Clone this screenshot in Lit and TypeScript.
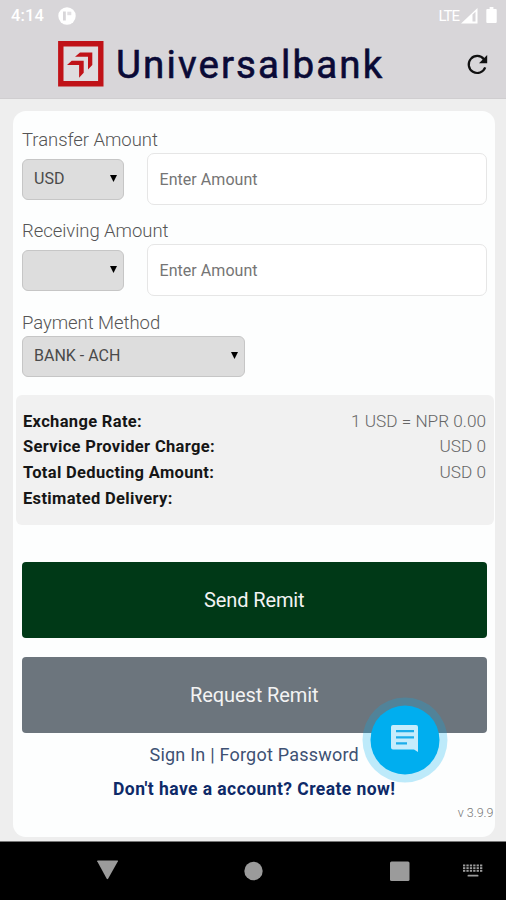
import { LitElement, html, css, svg } from "lit";
import { customElement, property } from "lit/decorators.js";

@customElement("select-box")
class SelectBox extends LitElement {
  @property() value = "";

  static styles = css`
    :host {
      display: flex;
      align-items: center;
      justify-content: space-between;
      box-sizing: border-box;
      height: 41px;
      padding: 0 6px 1px 11px;
      border: 1px solid #c6c6c6;
      border-radius: 6px;
      background: #dddddd;
      color: #4a4a4a;
      font: 400 16px Roboto, sans-serif;
      white-space: nowrap;
    }
    .arrow {
      width: 7px;
      height: 7px;
      fill: #000;
    }
  `;

  render() {
    return html`<span>${this.value}</span>
      <svg class="arrow" viewBox="0 0 7 7"><path d="M0 0h7L3.5 7z" /></svg>`;
  }
}

@customElement("app-root")
class AppRoot extends LitElement {
  static styles = css`
    :host {
      display: flex;
      flex-direction: column;
      position: relative;
      height: 900px;
      background: #eeeeee;
      font-family: Roboto, sans-serif;
      overflow: hidden;
    }
    svg {
      display: block;
    }
    .top {
      box-sizing: border-box;
      height: 99px;
      background: #d8d6d9;
      border-bottom: 1px solid #d0ced0;
    }
    .status {
      display: flex;
      align-items: center;
      height: 31px;
      padding: 0 8px 1px 11px;
      color: #fff;
      font-size: 16.5px;
      font-weight: 500;
    }
    .clock {
      width: 47px;
      letter-spacing: 0.1px;
    }
    .lte {
      margin-left: auto;
      margin-right: 2px;
      font-size: 15px;
      font-weight: 400;
      letter-spacing: -1px;
    }
    .battery {
      margin-left: 8px;
    }
    .brand {
      display: flex;
      align-items: center;
      height: 64px;
      padding: 0 17px 0 58px;
    }
    .name {
      flex: 1;
      margin-left: 12px;
      padding-top: 2px;
      color: #0a0a36;
      font-size: 38.5px;
      line-height: 60px;
      letter-spacing: 2.1px;
      white-space: nowrap;
      -webkit-text-stroke: 0.6px #0a0a36;
    }
    .card {
      display: flex;
      flex-direction: column;
      box-sizing: border-box;
      width: 482px;
      height: 726px;
      margin: 12px 0 0 13px;
      padding: 18px 8.5px 0 9px;
      border-radius: 13px;
      background: #fdfefe;
    }
    .label {
      height: 22px;
      color: #555;
      font-size: 18.5px;
      font-weight: 300;
      line-height: 22px;
      letter-spacing: -0.05px;
      white-space: nowrap;
    }
    .row {
      display: flex;
      align-items: center;
      justify-content: space-between;
      height: 52px;
      margin: 2px 0 15.3px;
    }
    .currency {
      width: 102px;
    }
    .method {
      width: 223px;
      margin-top: 2px;
    }
    .input {
      box-sizing: border-box;
      width: 340px;
      height: 52px;
      padding: 0 12px;
      border: 1.5px solid #e6e6e6;
      border-radius: 7px;
      background: #fff;
      color: #757575;
      font-size: 16px;
      line-height: 51px;
      letter-spacing: 0.05px;
    }
    .summary {
      box-sizing: border-box;
      height: 130px;
      margin: 18px -7px 0 -6px;
      padding: 14px 7.5px 0 7px;
      border-radius: 6px;
      background: #f1f1f1;
    }
    .line {
      display: flex;
      justify-content: space-between;
      height: 25.7px;
      color: #161616;
      font-size: 16.5px;
      font-weight: 700;
      line-height: 25.7px;
      letter-spacing: 0.33px;
    }
    .amount {
      color: #666;
      font-size: 17.2px;
      font-weight: 300;
      letter-spacing: 0;
    }
    .button {
      flex: none;
      height: 76px;
      margin-top: 37px;
      border-radius: 4px;
      background: #003917;
      color: #f3f3f3;
      font-size: 20px;
      line-height: 76px;
      letter-spacing: -0.1px;
      text-align: center;
    }
    .grey {
      margin-top: 19px;
      background: #6c757d;
    }
    .links {
      margin-top: 10px;
      color: #3d5173;
      font-size: 18px;
      line-height: 24px;
      letter-spacing: 0.22px;
      text-align: center;
      white-space: nowrap;
    }
    .create {
      margin-top: 10px;
      color: #0e2a68;
      font-size: 17.5px;
      font-weight: 700;
      line-height: 24px;
      letter-spacing: 0.43px;
      text-align: center;
    }
    .version {
      margin: 4px -7px 0 0;
      color: #777;
      font-size: 12.5px;
      font-weight: 300;
      line-height: 16px;
      text-align: right;
    }
    .chat {
      position: absolute;
      left: 362px;
      top: 697px;
    }
    .nav {
      display: flex;
      align-items: center;
      box-sizing: border-box;
      height: 59px;
      margin-top: auto;
      border-top: 1px solid #777;
      background: #000;
    }
  `;

  amountRow(label: string, currency: string) {
    return html`<div class="label">${label}</div>
      <div class="row">
        <select-box class="currency" .value=${currency}></select-box>
        <div class="input">Enter Amount</div>
      </div>`;
  }

  render() {
    const lines = [
      ["Exchange Rate:", "1 USD = NPR 0.00"],
      ["Service Provider Charge:", "USD 0"],
      ["Total Deducting Amount:", "USD 0"],
      ["Estimated Delivery:", ""],
    ];
    const keys = [0, 1, 2].map((r) =>
      [0, 1, 2, 3, 4, 5].map(
        (c) => svg`<rect x=${463 + c * 3.4} y=${22.5 + r * 2.7} width="2.3" height="1.9" />`
      )
    );
    return html`
      <div class="top">
        <div class="status">
          <span class="clock">4:14</span>
          <svg width="18" height="18" viewBox="0 0 18 18">
            <circle cx="9" cy="9" r="8.7" fill="#fff" />
            <path d="M5 4.5h2.8v9H5z" fill="#d8d6d9" />
            <path d="M9.3 4.7h4v3.5h-4z" fill="#e2e0e3" />
          </svg>
          <span class="lte">LTE</span>
          <svg width="17" height="16" viewBox="0 0 17 16">
            <path d="M16.5 0v15.5H0z" fill="#fff" />
            <path d="M11.5 6.5 14.5 3.8v9.8h-3z" fill="#d8d6d9" />
          </svg>
          <svg class="battery" width="12" height="17" viewBox="0 0 12 18">
            <path d="M3.5 0h4v2H10q1 0 1 1v13q0 1-1 1H1q-1 0-1-1V3q0-1 1-1h2.5z" fill="#fff" />
          </svg>
        </div>
        <div class="brand">
          <svg width="46" height="46" viewBox="0 0 46 46">
            <path d="M2.8 2.8h40v40h-40z" fill="#dfdcdf" stroke="#c01218" stroke-width="5.4" />
            <path d="M22 11.5h12.3V24L30 28.5V15.8H17z" fill="#c01218" />
            <path d="M13.7 19.7h12v12.1l-4.6 4.9V24H9z" fill="#c01218" />
          </svg>
          <div class="name">Universalbank</div>
          <svg width="24" height="24" viewBox="0 0 24 24">
            <path
              d="M18.9 7.2A8.5 8.5 0 1 0 20.2 15.4"
              fill="none" stroke="#111" stroke-width="2.2" />
            <path d="M22.2 3v8.2H14z" fill="#111" />
          </svg>
        </div>
      </div>

      <div class="card">
        ${this.amountRow("Transfer Amount", "USD")}
        ${this.amountRow("Receiving Amount", "")}
        <div class="label">Payment Method</div>
        <select-box class="method" .value=${"BANK - ACH"}></select-box>
        <div class="summary">
          ${lines.map(
            ([name, amount]) =>
              html`<div class="line"><span>${name}</span><span class="amount">${amount}</span></div>`
          )}
        </div>
        <div class="button">Send Remit</div>
        <div class="button grey">Request Remit</div>
        <div class="links">Sign In | Forgot Password</div>
        <div class="create">Don't have a account? Create now!</div>
        <div class="version">v 3.9.9</div>
      </div>

      <svg class="chat" width="86" height="86" viewBox="0 0 86 86">
        <circle cx="43" cy="43" r="42.5" fill="#00aeef" fill-opacity="0.25" />
        <circle cx="43" cy="43" r="34.5" fill="#00aeef" />
        <path d="M31 28h23q2 0 2 2v25l-4-2.5H31q-2 0-2-2V30q0-2 2-2z" fill="#c5ecfc" />
        <path d="M34 34.2h18M34 40.4h18M34 46.4h11" stroke="#1badea" stroke-width="2.2" />
      </svg>

      <div class="nav">
        <svg width="506" height="58" viewBox="0 0 506 58" fill="#9b9b9b">
          <path d="M98 18.5h19.5q.8 0 .4.8l-9.8 17.5q-.7.8-1.4 0L97.2 19.3q-.4-.8.8-.8z" />
          <circle cx="253.5" cy="29" r="9.2" />
          <rect x="390" y="19.5" width="19.5" height="19.5" rx="1.5" />
          ${keys}
          <rect x="467.5" y="32.8" width="11" height="1.8" rx=".9" />
        </svg>
      </div>
    `;
  }
}
